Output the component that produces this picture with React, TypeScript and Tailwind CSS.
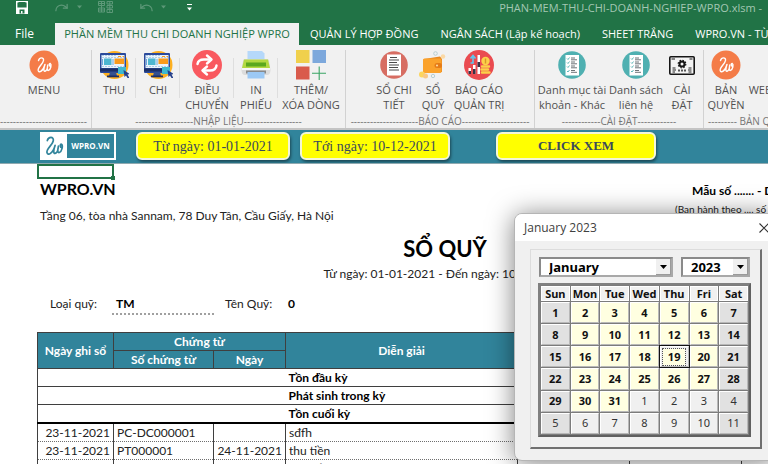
import React from 'react';
import type { ReactNode } from 'react';
import { Redo, Undo } from 'lucide-react';
import clsx from 'clsx';

const tabs = ['QUẢN LÝ HỢP ĐỒNG', 'NGÂN SÁCH (Lập kế hoạch)', 'SHEET TRẮNG', 'WPRO.VN - TÙY CHỌN'];

const weekDays = ['Sun', 'Mon', 'Tue', 'Wed', 'Thu', 'Fri', 'Sat'];

const months = [
  'January', 'February', 'March', 'April', 'May', 'June',
  'July', 'August', 'September', 'October', 'November', 'December',
];

const entries = [
  { posted: '23-11-2021', voucher: 'PC-DC000001', date: '', note: 'sđfh' },
  { posted: '23-11-2021', voucher: 'PT000001', date: '24-11-2021', note: 'thu tiền' },
  { posted: '23-11-2021', voucher: 'PC000001', date: '', note: 'chi tiết' },
];

const summaries = ['Tồn đầu kỳ', 'Phát sinh trong kỳ', 'Tồn cuối kỳ'];

/* ---------- icons ---------- */

const Scribble = ({ color }: { color: string }) => (
  <g fill="none" stroke={color} strokeWidth="1.400" strokeLinecap="round" strokeLinejoin="round">
    <path d="M9.500 10.500C10.500 7 15 7 14.500 10.500C14 14 8.500 17.500 9.200 20.500C10 23.300 14 21.500 16 14.500C14.500 18.500 14.500 21.500 16 21.200C17.800 20.800 18.600 17.500 18.800 15C18 18.500 18 20.800 19.500 20.400C21.800 19.500 22.800 14.500 21.300 13.500C20 13.200 20 16 21.500 16.500" />
  </g>
);

const WproIcon = () => (
  <svg viewBox="0 0 30 30" className="size-[30px]">
    <circle cx="15" cy="15" r="14.500" fill="#f47c48" />
    <Scribble color="#fff" />
  </svg>
);

const ComputerIcon = () => (
  <svg viewBox="0 0 30 30" className="size-[30px]">
    <circle cx="15.500" cy="15" r="14" fill="#fdb022" />
    <rect x="1" y="3" width="26" height="20" rx="1" fill="#2b4a9b" />
    <rect x="2.500" y="5" width="23" height="13" fill="#eaf3fb" />
    <path d="M3 5.500H17M3 7.500H25M3 16.500H25" stroke="#9fc3e4" strokeWidth="0.800" strokeDasharray="2 1" />
    <rect x="5" y="8.500" width="7.500" height="6.500" fill="#4db6d0" />
    <path d="M3.500 9V15M14 9V15" stroke="#6aa9dc" />
    <rect x="15.500" y="8.500" width="9.500" height="5.500" fill="#f99b1c" />
    <path d="M19 6.500H22M23.500 6.500H25" stroke="#f99b1c" />
    <rect x="1" y="18.500" width="26" height="3" fill="#1c2f66" />
    <path d="M11 22H17L18 26H10Z" fill="#34508f" />
    <rect x="8" y="25.500" width="12" height="1.800" fill="#1c2f66" />
    <rect x="19" y="17" width="8" height="7" fill="#3fb9cf" />
    <path d="M24.500 20L31 24L28.500 24.500L30.500 28L28.500 28L27 25.500L25.500 27Z" fill="#26408b" />
  </svg>
);

const TransferIcon = () => (
  <svg viewBox="0 0 30 30" className="size-[30px]">
    <circle cx="15" cy="15" r="15" fill="#f9595f" />
    <g fill="none" stroke="#fff" strokeWidth="2.400" strokeLinejoin="round" strokeLinecap="round">
      <path d="M5.500 14C6 10.500 9 9.500 12 9.500H19" />
      <path d="M15 5.500L19.500 9.500L15 13.500" />
      <path d="M24.500 15.500C24 19.500 21 20.500 18 20.500H11" />
      <path d="M15 16.500L10.500 20.500L15 24.500" />
    </g>
  </svg>
);

const PrinterIcon = () => (
  <svg viewBox="0 0 30 30" className="size-[30px]">
    <path d="M6.500 1H21L23.500 3.500V12H6.500Z" fill="#b5d8fa" />
    <path d="M2 11Q2 9 4 9H26Q28 9 28 11L29.500 20Q29.500 25 26 25H4Q0.500 25 0.500 20Z" fill="#dcdcdc" />
    <path d="M3 9.500H27L29 18H1Z" fill="#b3d943" />
    <rect x="5" y="12.500" width="20" height="4" fill="#5ba81f" />
    <path d="M1 19H29" stroke="#f7f7f7" strokeWidth="2" />
    <rect x="5" y="20.500" width="20" height="3" fill="#8a8a8a" />
    <path d="M6.500 22H23.500V28.500H6.500Z" fill="#9cc9f5" />
  </svg>
);

const RowsIcon = () => (
  <svg viewBox="0 0 30 30" className="size-[30px]">
    <rect x="0" y="0" width="13.500" height="13" fill="#f0d04c" />
    <rect x="16.500" y="0" width="13.500" height="13" fill="#7da8dc" />
    <rect x="0" y="16.500" width="13.500" height="13" fill="#d95b4c" />
    <path d="M23.200 16.500V30M16 23.200H30.500" stroke="#3aa565" strokeWidth="1.100" />
  </svg>
);

const DetailIcon = () => (
  <svg viewBox="0 0 30 30" className="size-[30px]">
    <circle cx="15" cy="15" r="13.800" fill="#d76d62" />
    <rect x="8" y="4.500" width="14" height="21" fill="#fff" />
    <path d="M11 7.500H18M10 10H20M10 12.500H18M10 15H20M10 17.500H19M10 20H20" stroke="#4a4a4a" strokeWidth="1.100" />
  </svg>
);

const WalletIcon = () => (
  <svg viewBox="0 0 30 30" className="size-[30px]">
    <path d="M6 9L22 6.500L24 9V22H7Q5.500 22 5.500 20V9Z" fill="#e8871e" />
    <rect x="5" y="8.500" width="18.500" height="14.500" rx="1.500" fill="#fba22b" />
    <rect x="16.500" y="13" width="7.500" height="5" rx="2.500" fill="#e57b17" />
    <circle cx="19" cy="15.500" r="1" fill="#ffe1a8" />
    <circle cx="17.500" cy="3.500" r="1.800" fill="none" stroke="#b9cfd3" />
    <circle cx="25" cy="6.500" r="2.200" fill="#fbd9a5" />
    <circle cx="4" cy="24.500" r="3" fill="#fcd55f" />
    <circle cx="7.500" cy="26" r="2.500" fill="#f9c784" />
    <circle cx="15" cy="26" r="1.700" fill="none" stroke="#b9cfd3" />
  </svg>
);

const ReportIcon = () => (
  <svg viewBox="0 0 30 30" className="size-[30px]">
    <circle cx="15" cy="15" r="15" fill="#ea4b50" />
    <rect x="4.500" y="18" width="2.500" height="6" fill="#fff" />
    <rect x="9" y="15" width="2.500" height="9" fill="#fff" />
    <rect x="13.500" y="5" width="2.500" height="19" fill="#fff" />
    <path d="M4.500 21H7V24H4.500ZM9 19H11.500V24H9ZM13.500 12H16V17H13.500Z" fill="#3b3346" />
    <path d="M6.500 13H9V6M6.500 8.500L9 5.500L11.500 8.500" fill="none" stroke="#5fc8ee" strokeWidth="1.600" />
    <circle cx="21.500" cy="11" r="4.200" fill="#fcd049" />
    <path d="M21.500 8.500V13.500" stroke="#d9962a" strokeWidth="1.400" />
    <path d="M18 16.500H25M17.500 19.500H24M18 22.500H25.500" stroke="#fcd049" strokeWidth="2.400" strokeLinecap="round" />
  </svg>
);

const ChecklistIcon = () => (
  <svg viewBox="0 0 30 30" className="size-[30px]">
    <circle cx="15" cy="15" r="13.800" fill="#4fb0b1" />
    <rect x="8.500" y="5" width="13.500" height="20.500" fill="#fff" />
    <path d="M14 8H18M14 9.800H20M14 12H18M14 13.800H20M14 16H18M14 17.800H20M14 20.500H18M14 22.300H20" stroke="#6d7377" />
    <path d="M10 8.500L11 9.500L12.500 7.500M10 12.500L11 13.500L12.500 11.500M10 16.500L11 17.500L12.500 15.500M10 21L11 22L12.500 20" fill="none" stroke="#4fb0b1" strokeWidth="0.900" />
  </svg>
);

const SettingsIcon = () => (
  <svg viewBox="0 0 30 30" className="size-[30px]">
    <rect x="2.800" y="6.800" width="24.400" height="17.400" rx="1" fill="#f4f4f4" stroke="#161616" strokeWidth="1.600" />
    <path d="M4.500 9H8M22.500 9H25.500" stroke="#161616" />
    <circle cx="15" cy="14" r="2.500" fill="none" stroke="#161616" strokeWidth="2" />
    <circle cx="15" cy="14" r="3.800" fill="none" stroke="#161616" strokeWidth="1.200" strokeDasharray="1.500 1.480" />
    <path d="M5.500 18H8.500M5.500 20H9M5.500 22H8M21.500 18H24.500M21 20H24.500M21.500 22H24.500" stroke="#222" strokeWidth="1.200" />
    <path d="M11 20.500H19" stroke="#555" strokeWidth="1.800" strokeDasharray="2 1" />
  </svg>
);

const SaveIcon = () => (
  <svg viewBox="0 0 12 13" className="h-[13px] w-3">
    <path d="M0.700 0.700H11.300V12.300H0.700Z" fill="#217346" stroke="#fff" strokeWidth="1.400" />
    <path d="M2.500 1H9.500V6H2.500Z" fill="#217346" />
    <path d="M1 6.500H11V12H1Z" fill="#fff" />
    <path d="M3.500 8.500H8.500V12.500H3.500Z" fill="#217346" />
    <path d="M5 10H6.500V12.500H5Z" fill="#fff" />
  </svg>
);

const SheetIcon = () => (
  <svg viewBox="0 0 15 12" className="h-3 w-[15px]" fill="none" stroke="#5d9878">
    <path d="M0.500 0.500H6.500V4.500H0.500ZM0.500 7H6.500V11H0.500ZM3.500 0V11M0 2.500H6M0 9H6" />
    <path d="M9 0.500H14.500V3H9ZM9 4.500H14.500V7H9ZM9 8.500H14.500V11.500H9ZM11.800 0V12" />
  </svg>
);

const Caret = ({ className }: { className?: string }) => (
  <svg viewBox="0 0 7 4" className={clsx('h-1', className ?? 'w-[7px]')}>
    <path d="M0 0H7L3.500 4Z" fill="currentColor" />
  </svg>
);

/* ---------- ribbon ---------- */

interface RibbonButtonProps {
  icon: ReactNode;
  lines: string[];
  width: string;
  divided?: boolean;
}

const RibbonButton = ({ icon, lines, width, divided }: RibbonButtonProps) => (
  <div className={clsx('relative flex shrink-0 justify-center', width)}>
    <button type="button" className="flex flex-col items-center whitespace-nowrap">
      {icon}
      <span className="mt-0.5 block">
        {lines.map((line) => (
          <span key={line} className="block">{line}</span>
        ))}
      </span>
    </button>
    {divided && <span className="absolute top-2 right-0 h-10 w-px bg-[#dedede]" />}
  </div>
);

interface RibbonGroupProps {
  label: string;
  width: string;
  pad?: string;
  labelPad?: string;
  children: ReactNode;
}

const RibbonGroup = ({ label, width, pad, labelPad = 'justify-center', children }: RibbonGroupProps) => (
  <section className={clsx('flex shrink-0 flex-col overflow-hidden pt-[5px]', width)}>
    <div className="flex flex-1 border-r border-[#d2d2d2]">
      <div className="flex w-full flex-col">
        <div className={clsx('flex h-[62px]', pad)}>{children}</div>
        <div className={clsx('flex h-[18px] items-center text-[10px] whitespace-nowrap text-[#767676]', labelPad)}>
          {label}
        </div>
      </div>
    </div>
  </section>
);

const Ribbon = () => (
  <div className="flex h-[85px] overflow-hidden border-b-2 border-[#c4c4c4] bg-[#f1f1f1] text-[11px] leading-[15px] text-[#505050]">
    <RibbonGroup label="---------------------------" width="w-[92px]" labelPad="justify-start">
      <RibbonButton icon={<WproIcon />} lines={['MENU']} width="w-[88px]" />
    </RibbonGroup>
    <RibbonGroup label="------------------NHẬP LIỆU------------------" width="w-[254px]">
      <RibbonButton icon={<ComputerIcon />} lines={['THU']} width="w-11" divided />
      <RibbonButton icon={<ComputerIcon />} lines={['CHI']} width="w-11" divided />
      <RibbonButton icon={<TransferIcon />} lines={['ĐIỀU', 'CHUYỂN']} width="w-[54px]" divided />
      <RibbonButton icon={<PrinterIcon />} lines={['IN', 'PHIẾU']} width="w-11" divided />
      <RibbonButton icon={<RowsIcon />} lines={['THÊM/', 'XÓA DÒNG']} width="w-[66px]" />
    </RibbonGroup>
    <RibbonGroup label="---------------------BÁO CÁO---------------------" width="w-[189px]" pad="pl-6">
      <RibbonButton icon={<DetailIcon />} lines={['SỔ CHI', 'TIẾT']} width="w-12" />
      <RibbonButton icon={<WalletIcon />} lines={['SỔ', 'QUỸ']} width="w-[30px]" />
      <RibbonButton icon={<ReportIcon />} lines={['BÁO CÁO', 'QUẢN TRỊ']} width="w-[62px]" />
    </RibbonGroup>
    <RibbonGroup label="------------CÀI ĐẶT------------" width="w-[169px]" pad="pl-[3px]">
      <RibbonButton icon={<ChecklistIcon />} lines={['Danh mục tài', 'khoản - Khác']} width="w-[68px]" />
      <RibbonButton icon={<ChecklistIcon />} lines={['Danh sách', 'liên hệ']} width="w-[60px]" />
      <RibbonButton icon={<SettingsIcon />} lines={['CÀI', 'ĐẶT']} width="w-8" />
    </RibbonGroup>
    <RibbonGroup label="--------- BẢN QUYỀN ---------" width="w-[140px]" labelPad="justify-start pl-1">
      <RibbonButton icon={<WproIcon />} lines={['BẢN', 'QUYỀN']} width="w-11" />
      <RibbonButton icon={<span className="block size-[30px]" />} lines={['WEBSITE']} width="w-[46px]" />
    </RibbonGroup>
  </div>
);

const TitleBar = () => (
  <header className="bg-[#217346] text-white">
    <div className="flex h-[23px] items-start justify-between overflow-hidden text-[11px] whitespace-nowrap">
      <div className="flex h-3.5 shrink-0 items-center pl-4 text-[#5d9878]">
        <button type="button" aria-label="Save"><SaveIcon /></button>
        <button type="button" aria-label="Redo" className="ml-[26px]"><Redo size={15} /></button>
        <Caret className="ml-2 w-[5px]" />
        <button type="button" aria-label="Sheet" className="ml-4"><SheetIcon /></button>
        <button type="button" aria-label="Undo" className="ml-[26px]"><Undo size={15} /></button>
        <Caret className="ml-[7px] w-[5px]" />
        <button type="button" aria-label="Customize" className="ml-[21px] flex flex-col items-center gap-0.5 text-white">
          <span className="block h-px w-[5px] bg-white" />
          <Caret className="w-[5px]" />
        </button>
      </div>
      <span className="shrink-0 pr-1.5 leading-4 text-[#a3c7b3]">PHAN-MEM-THU-CHI-DOANH-NGHIEP-WPRO.xlsm -</span>
    </div>
    <nav className="flex h-[22px] overflow-hidden text-[11px] leading-[22px] whitespace-nowrap">
      <button type="button" className="w-[55px] shrink-0 pr-1.5 text-[12px]">File</button>
      <button type="button" className="w-[244px] shrink-0 bg-[#f1f1f1] text-[#217346]">PHẦN MỀM THU CHI DOANH NGHIỆP WPRO</button>
      {tabs.map((tab) => (
        <button key={tab} type="button" className="shrink-0 px-[11px]">{tab}</button>
      ))}
    </nav>
  </header>
);

/* ---------- worksheet ---------- */

const yellowButton =
  "h-7 shrink-0 rounded-md border-2 border-[#f3f6d8] bg-[#ffff00] font-['Liberation_Serif',serif] text-[#3b4a5c] shadow-[1px_2px_3px_rgba(0,0,0,0.45)]";

const ActionBar = () => (
  <div className="flex h-[34px] items-start overflow-hidden border-b border-[#8fa9b0] bg-[#31849b] pt-0.5 pl-10 whitespace-nowrap">
    <div className="flex h-7 w-[76px] shrink-0 items-stretch bg-white p-0.5">
      <svg viewBox="6 5 19 20" className="w-[25px]">
        <Scribble color="#31849b" />
      </svg>
      <span className="flex flex-1 items-center justify-center bg-[#31849b] text-[8px] font-bold text-white">WPRO.VN</span>
    </div>
    <button type="button" className={clsx(yellowButton, 'ml-5 w-[154px] text-[14px]')}>Từ ngày: 01-01-2021</button>
    <button type="button" className={clsx(yellowButton, 'ml-2.5 w-[150px] text-[14px]')}>Tới ngày: 10-12-2021</button>
    <button type="button" className={clsx(yellowButton, 'ml-[46px] w-40 text-[13px] font-bold')}>CLICK XEM</button>
  </div>
);

const SheetHeading = () => (
  <div className="text-[12px] leading-[18px] whitespace-nowrap">
    <div className="relative ml-[37px] h-[15px] w-[77px] border-2 border-[#217346]">
      <span className="absolute -right-[3px] -bottom-[3px] size-1 bg-[#217346]" />
    </div>
    <div className="flex justify-between overflow-hidden pl-10">
      <div>
        <h2 className="text-[16px] leading-5 font-bold text-black">WPRO.VN</h2>
        <p className="mt-2">Tầng 06, tòa nhà Sannam, 78 Duy Tân, Cầu Giấy, Hà Nội</p>
      </div>
      <div className="w-[93px] shrink-0 pt-[3px]">
        <p className="pl-[17px] font-bold text-black">Mẫu số ....... - DN</p>
        <p className="text-[10px]">(Ban hành theo .... số ....)</p>
      </div>
    </div>
    <div className="flex flex-col items-center pt-2 pr-3 pl-[134px]">
      <h1 className="text-[22px] leading-8 font-bold text-black">SỔ QUỸ</h1>
      <p>Từ ngày: 01-01-2021 - Đến ngày: 10-12-2021</p>
    </div>
    <div className="mt-3 flex h-5 pl-[50px]">
      <span className="w-[62px]">Loại quỹ:</span>
      <span className="w-[102px] border-b-2 border-dotted border-[#a0a0a0] pl-1 font-bold text-black">TM</span>
      <span className="ml-[11px] w-[63px]">Tên Quỹ:</span>
      <span className="font-bold text-black">0</span>
    </div>
  </div>
);

const line = 'border border-[#3f3f3f]';

const Ledger = () => (
  <div className="mt-[17px] overflow-hidden pl-[37px]">
    <table className="w-[816px] table-fixed border-collapse text-[12px] leading-[17px] whitespace-nowrap">
      <colgroup>
        <col className="w-[76px]" />
        <col className="w-[100px]" />
        <col className="w-[72px]" />
        <col className="w-[232px]" />
        <col className="w-28" />
        <col className="w-28" />
        <col className="w-28" />
      </colgroup>
      <thead className="bg-[#31849b] text-white">
        <tr className="h-[18px]">
          <th rowSpan={2} className={line}>Ngày ghi sổ</th>
          <th colSpan={2} className={line}>Chứng từ</th>
          <th rowSpan={2} className={line}>Diễn giải</th>
          <td rowSpan={2} className={line} />
          <td rowSpan={2} className={line} />
          <td rowSpan={2} className={line} />
        </tr>
        <tr className="h-[18px]">
          <th className={line}>Số chứng từ</th>
          <th className={line}>Ngày</th>
        </tr>
      </thead>
      <tbody>
        {summaries.map((label) => (
          <tr key={label} className="h-[18px] border border-[#3f3f3f] font-bold text-black">
            <td colSpan={3} />
            <td className="pl-[3px]">{label}</td>
            <td className="border-x border-[#3f3f3f]" />
            <td className="border-x border-[#3f3f3f]" />
            <td />
          </tr>
        ))}
      </tbody>
      <tbody className="border-t-2 border-black">
        {entries.map((entry, index) => (
          <tr key={index} className="h-[18px] border-b border-b-[#6f6f6f] [border-bottom-style:dotted]">
            <td className="border-x border-[#3f3f3f] pr-[3px] text-right">{entry.posted}</td>
            <td className="border-x border-[#3f3f3f] pl-[3px]">{entry.voucher}</td>
            <td className="border-x border-[#3f3f3f] pr-[3px] text-right">{entry.date}</td>
            <td className="border-x border-[#3f3f3f] pl-[3px]">{entry.note}</td>
            <td className="border-x border-[#3f3f3f]" />
            <td className="border-x border-[#3f3f3f]" />
            <td className="border-x border-[#3f3f3f]" />
          </tr>
        ))}
      </tbody>
    </table>
  </div>
);

/* ---------- date picker ---------- */

interface PickerSelectProps {
  label: string;
  options: string[];
  width: string;
}

const PickerSelect = ({ label, options, width }: PickerSelectProps) => (
  <div className={clsx('flex h-5 border-2 border-t-[#8a8a8a] border-r-[#a8a8a8] border-b-[#a8a8a8] border-l-[#8a8a8a] bg-white', width)}>
    <select
      aria-label={label}
      defaultValue={options[0]}
      className="h-4 min-w-0 flex-1 appearance-none bg-white pl-2 text-[13px] leading-4 font-bold text-black outline-none"
    >
      {options.map((option) => (
        <option key={option}>{option}</option>
      ))}
    </select>
    <span className="pointer-events-none flex w-[15px] items-center justify-center border-r border-b border-[#9a9a9a] bg-[#f0f0f0] text-black">
      <Caret />
    </span>
  </div>
);

// 42 cells: the whole of January, then the first days of February
const weeks = Array.from({ length: 6 }, (_, week) =>
  Array.from({ length: 7 }, (_, day) => week * 7 + day + 1),
);

const DatePicker = () => (
  <div
    role="dialog"
    aria-label="January 2023"
    className="absolute top-[213px] left-[514px] w-[262px] overflow-hidden rounded-lg border border-[#b5b5b5] bg-[#f0f0f0] shadow-[0_2px_26px_rgba(0,0,0,0.5)]"
  >
    <div className="flex h-[27px] items-center justify-between bg-white pr-1.5 pl-[9px] text-[12px] text-[#404040]">
      <span>January 2023</span>
      <button type="button" aria-label="Close">
        <svg viewBox="0 0 10 10" className="size-2.5" stroke="#333" strokeWidth="1.100">
          <path d="M0.500 0.500L9.500 9.500M9.500 0.500L0.500 9.500" />
        </svg>
      </button>
    </div>
    <div className="mx-[15px] mt-2 mb-[11px] w-[232px] border border-t-[#dcdcdc] border-r-2 border-r-[#707070] border-b-2 border-b-[#707070] border-l-[#dcdcdc] px-2 pt-[7px] pb-2.5 font-['Noto_Sans',sans-serif]">
      <div className="flex gap-2">
        <PickerSelect label="Month" options={months} width="w-[134px]" />
        <PickerSelect label="Year" options={['2023', '2024', '2025']} width="w-[69px]" />
      </div>
      <table className="mt-1.5 -ml-px h-[154px] w-[213px] table-fixed border-separate border-spacing-px border-2 border-t-[#808080] border-r-[#606060] border-b-[#606060] border-l-[#808080] bg-[#7c7c7c] text-[11px] text-[#111]">
        <thead>
          <tr className="h-[15px] leading-[13px]">
            {weekDays.map((day) => (
              <th key={day} className="border border-white bg-[#f0f0f0]">{day}</th>
            ))}
          </tr>
        </thead>
        <tbody>
          {weeks.map((week) => (
            <tr key={week[0]}>
              {week.map((cell, day) => {
                const inMonth = cell <= 31;
                const weekend = day === 0 || day === 6;
                return (
                  <td
                    key={cell}
                    className={clsx(
                      'border border-t-white border-r-[#b8b8b8] border-b-[#b8b8b8] border-l-white text-center leading-4',
                      weekend ? 'bg-[#e1e1e1]' : inMonth && cell !== 19 ? 'bg-[#ffffe1]' : 'bg-[#f0f0f0]',
                      inMonth ? 'font-bold' : 'text-[#333]',
                      cell === 19 && 'outline outline-[#111]',
                    )}
                  >
                    <button
                      type="button"
                      className={clsx('w-[22px]', cell === 19 && 'bg-[#ffffe1] outline-1 outline-[#555] outline-dotted')}
                    >
                      {inMonth ? cell : cell - 31}
                    </button>
                  </td>
                );
              })}
            </tr>
          ))}
        </tbody>
      </table>
    </div>
  </div>
);

export default function App() {
  return (
    <div className="relative h-screen overflow-hidden bg-white font-['Open_Sans','Noto_Sans',sans-serif]">
      <TitleBar />
      <Ribbon />
      <ActionBar />
      <main className="font-['Lato','Noto_Sans',sans-serif] text-[#222]">
        <SheetHeading />
        <Ledger />
      </main>
      <DatePicker />
    </div>
  );
}
